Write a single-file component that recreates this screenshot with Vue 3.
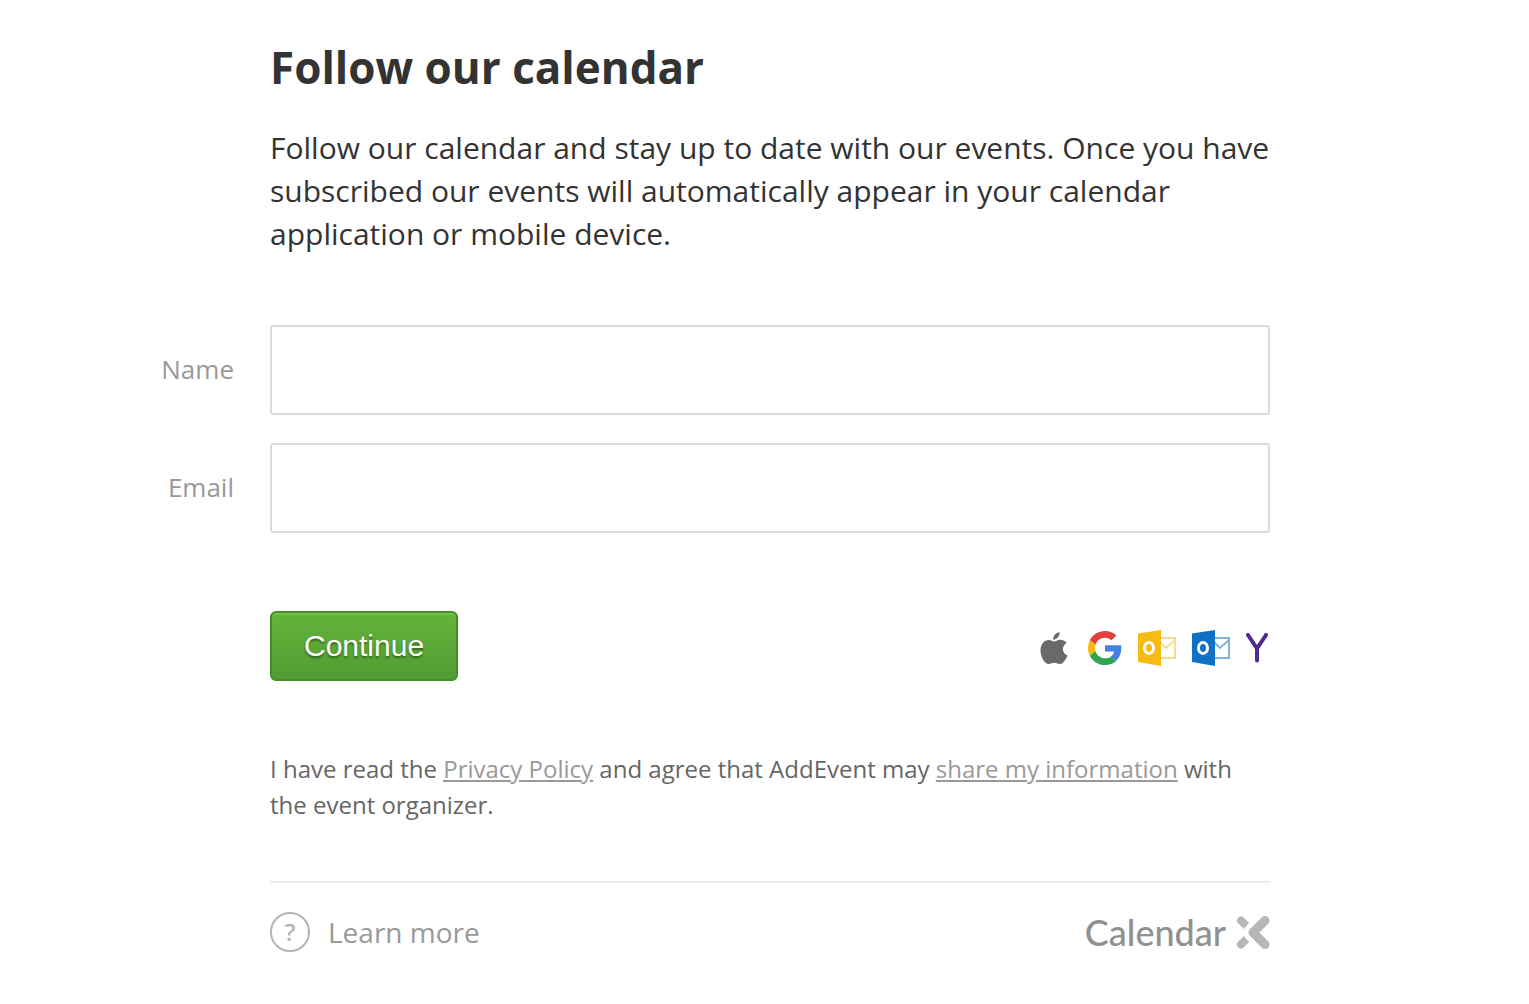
<template>
  <main class="page">
    <h1 class="title">Follow our calendar</h1>
    <p class="intro">
      Follow our calendar and stay up to date with our events. Once you have
      subscribed our events will automatically appear in your calendar
      application or mobile device.
    </p>

    <form class="form" @submit.prevent="submit">
      <div v-for="field in fields" :key="field.id" class="field">
        <label class="label" :for="field.id">{{ field.label }}</label>
        <input :id="field.id" v-model="form[field.id]" class="input" :type="field.type" />
      </div>

      <div class="actions">
        <button class="continue" type="submit">Continue</button>
        <div class="services">
          <svg class="apple" viewBox="0 0 28 34" width="28" height="34" aria-label="Apple">
            <path
              fill="#696969"
              d="M19.500 1C20 5 17 8.500 13.200 8.600C13 5 15.800 1.800 19.500 1ZM14 10.600C15.500 10.600 17.500 8.800 20.500 8.800C23 8.900 25.300 10 26.600 12C21 15.400 22.300 22.600 27.500 24.500C26.300 28 23 33 20 33C17.700 33 17 31.700 14.300 31.700C11.600 31.700 10.700 33 8.500 33C4.800 33 .500 25.600.500 19.400C.500 12.800 4.500 9 8.600 9C11.200 9 12.800 10.600 14 10.600Z"
            />
          </svg>
          <svg class="google" viewBox="0 0 48 48" width="34" height="34" aria-label="Google">
            <path fill="#e2403a" d="M24 9.500c3.500 0 6.700 1.200 9.200 3.600l6.900-6.900C35.900 2.400 30.500 0 24 0 14.600 0 6.500 5.400 2.600 13.200l8 6.200C12.400 13.700 17.700 9.500 24 9.500z" />
            <path fill="#4580e8" d="M47 24.500c0-1.600-.2-3.100-.4-4.500H24v9h12.900c-.6 3-2.300 5.500-4.800 7.200l7.700 6C44.300 38 47 32 47 24.500z" />
            <path fill="#f7bb10" d="M10.500 28.600A14.500 14.500 0 0 1 9.800 24c0-1.600.3-3.100.8-4.600l-8-6.200A24 24 0 0 0 0 24c0 3.900.9 7.500 2.600 10.800z" />
            <path fill="#30a44f" d="M24 48c6.500 0 11.900-2.100 15.900-5.800l-7.700-6c-2.200 1.400-4.900 2.300-8.200 2.300-6.300 0-11.600-4.200-13.500-9.900l-7.900 6.200C6.500 42.600 14.600 48 24 48z" />
          </svg>
          <svg
            v-for="mail in mailIcons"
            :key="mail.name"
            class="outlook"
            viewBox="0 0 38 36"
            width="38"
            height="36"
            :aria-label="mail.name"
          >
            <rect x="20" y="8" width="17" height="20" fill="#fff" :stroke="mail.edge" stroke-width="2" />
            <path d="M21 11l7 7 9-8" fill="none" :stroke="mail.edge" stroke-width="2" />
            <path d="M0 3.500L23 0v36L0 32z" :fill="mail.color" />
            <ellipse cx="11" cy="18" rx="4.500" ry="5.500" fill="none" stroke="#fff" stroke-width="3" />
          </svg>
          <svg class="yahoo" viewBox="0 0 24 30" width="24" height="30" aria-label="Yahoo">
            <path d="M2 2l9 13.500L20 2M11 15v12.500" fill="none" stroke="#4f2a91" stroke-width="4" stroke-linecap="round" />
          </svg>
        </div>
      </div>

      <p class="consent">
        I have read the <a href="#">Privacy Policy</a> and agree that AddEvent may
        <a href="#">share my information</a> with the event organizer.
      </p>
    </form>

    <footer class="footer">
      <a class="learn" href="#">
        <span class="help">?</span>
        Learn more
      </a>
      <div class="brand">
        <span>Calendar</span>
        <svg viewBox="0 0 34 34" width="34" height="34" aria-hidden="true">
          <path d="M5 5.500l6 6M5 29.500l6-6" fill="none" stroke="#b7b7b7" stroke-width="8" stroke-linecap="round" />
          <path d="M19 5L8 17.500 19 30" fill="none" stroke="#fff" stroke-width="5" />
          <path d="M29 5.500l-12 12 12 12" fill="none" stroke="#b7b7b7" stroke-width="9" stroke-linecap="round" stroke-linejoin="round" />
        </svg>
      </div>
    </footer>
  </main>
</template>

<script setup>
import { reactive } from 'vue';

const fields = [
  { id: 'name', label: 'Name', type: 'text' },
  { id: 'email', label: 'Email', type: 'email' }
];

const mailIcons = [
  { name: 'Outlook', color: '#f6bb10', edge: '#f5dd90' },
  { name: 'Outlook.com', color: '#0f70c4', edge: '#7fb4dc' }
];

const form = reactive({ name: '', email: '' });
const emit = defineEmits(['follow']);

const submit = () => {
  emit('follow', { ...form });
};
</script>

<style>
body {
  margin: 0;
  background: #fff;
}
</style>

<style scoped>
.page {
  box-sizing: border-box;
  padding: 37px 259px 36px 270px;
  font-family: 'Open Sans', 'Noto Sans', sans-serif;
  color: #333;
}

.title {
  margin: 0;
  font-size: 44px;
  line-height: 60px;
  font-weight: 700;
}

.intro {
  margin: 29px 0 70px;
  font-size: 30px;
  line-height: 43px;
}

/* Form */
.field {
  display: grid;
  grid-template-columns: 120px minmax(0, 1fr);
  column-gap: 36px;
  align-items: center;
  margin-left: -156px;
  margin-bottom: 28px;
}

.label {
  padding-bottom: 2px;
  text-align: right;
  font-size: 26px;
  line-height: 36px;
  color: #999;
}

.input {
  box-sizing: border-box;
  width: 100%;
  height: 90px;
  padding: 0 24px;
  border: 2px solid #dcdcdc;
  border-radius: 3px;
  background: #fff;
  font: inherit;
  font-size: 30px;
  color: #333;
}

.actions {
  display: flex;
  justify-content: space-between;
  align-items: center;
  margin-top: 78px;
}

.continue {
  height: 70px;
  padding: 0 32px;
  border: 2px solid #448f2a;
  border-radius: 6px;
  background: linear-gradient(#62b33a, #529c32);
  box-shadow: inset 0 2px 0 #74c04b;
  font-family: 'Liberation Sans', Arial, sans-serif;
  font-size: 30px;
  color: #fff;
  text-shadow: 0 2px 2px rgba(0, 0, 0, 0.4);
  cursor: pointer;
}

.services {
  display: flex;
  align-items: center;
  gap: 16px;
  padding-top: 4px;
}

.apple {
  margin-right: 4px;
}

.consent {
  margin: 70px 0 58px;
  font-size: 24px;
  line-height: 36px;
  color: #666;
}

.consent a {
  color: #999;
}

/* Footer */
.footer {
  display: flex;
  justify-content: space-between;
  align-items: center;
  padding-top: 29px;
  border-top: 2px solid #ececec;
}

.learn {
  display: flex;
  align-items: center;
  gap: 18px;
  font-size: 28px;
  line-height: 40px;
  color: #999;
  text-decoration: none;
}

.help {
  box-sizing: border-box;
  width: 40px;
  height: 40px;
  border: 2px solid #b5b5b5;
  border-radius: 50%;
  text-align: center;
  font-size: 24px;
  line-height: 36px;
  font-weight: 600;
  color: #b5b5b5;
}

.brand {
  display: flex;
  align-items: center;
  gap: 10px;
  font-family: Lato, sans-serif;
  font-size: 36px;
  line-height: 40px;
  font-weight: 500;
  color: #919191;
}

@media (max-width: 1100px) {
  .page {
    padding: 36px 40px;
  }

  .field {
    display: block;
    margin-left: 0;
  }
}
</style>
